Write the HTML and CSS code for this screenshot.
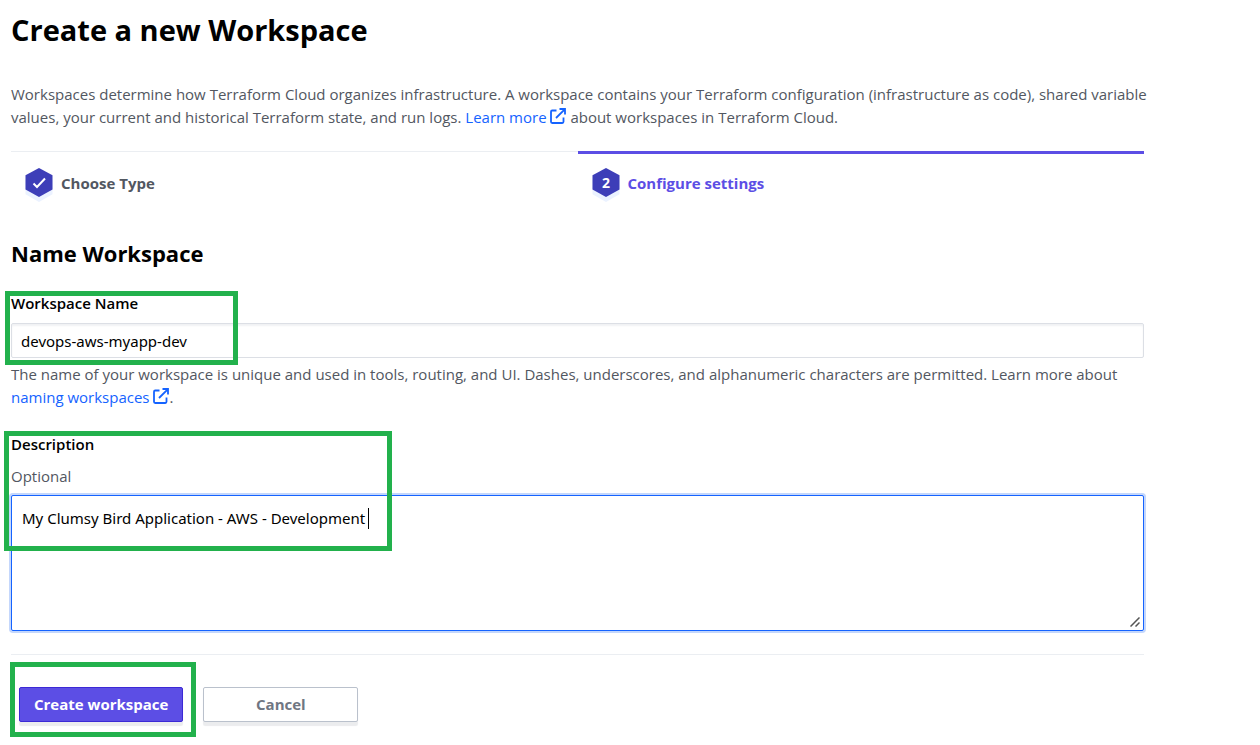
FILE: index.html
```html
<!DOCTYPE html>
<html lang="en">
<head>
<meta charset="utf-8">
<meta name="viewport" content="width=device-width, initial-scale=1">
<title>Create a new Workspace</title>
<link rel="stylesheet" href="styles.css">
</head>
<body>
<svg class="sprite" aria-hidden="true">
  <symbol id="external" viewBox="0 0 16 16">
    <path d="M6.500 2.500H2.200C1.500 2.500 1 3 1 3.700v10.100C1 14.500 1.500 15 2.200 15h10.100c.7 0 1.200-.5 1.200-1.200V9.500M9.500 1H15v5.500M14.700 1.300 6 10" fill="none" stroke="currentColor" stroke-width="1.800"/>
  </symbol>
  <symbol id="hexagon" viewBox="0 0 28 34">
    <path d="M14 5 27.500 12.300v14L14 34 .5 26.300v-14z" fill="#ebf2ff"/>
    <path d="M14 0 27.500 7.300v14.200L14 29 .5 21.500V7.300z" fill="#3d3eb8"/>
  </symbol>
</svg>
<main class="page">
  <h1 class="title">Create a new Workspace</h1>
  <p class="text">Workspaces determine how Terraform Cloud organizes infrastructure. A workspace contains your Terraform configuration (infrastructure as code), shared variable values, your current and historical Terraform state, and run logs. <a class="link" href="#">Learn more <svg class="link-icon" aria-hidden="true"><use href="#external"/></svg></a> about workspaces in Terraform Cloud.</p>

  <ol class="steps">
    <li class="step">
      <svg class="step-icon" viewBox="0 0 28 34" aria-hidden="true"><use href="#hexagon"/><path d="m8.500 15.500 3.500 3.500 8-8.500" fill="none" stroke="#fff" stroke-width="2"/></svg>
      Choose Type
    </li>
    <li class="step step-active" aria-current="step">
      <svg class="step-icon" viewBox="0 0 28 34" aria-hidden="true"><use href="#hexagon"/><text class="step-number" x="14" y="20">2</text></svg>
      Configure settings
    </li>
  </ol>

  <form class="form">
    <h2 class="heading">Name Workspace</h2>
    <div class="field field-name">
      <label class="label" for="name">Workspace Name</label>
      <input class="input" id="name" type="text" value="devops-aws-myapp-dev">
      <p class="text">The name of your workspace is unique and used in tools, routing, and UI. Dashes, underscores, and alphanumeric characters are permitted. Learn more about <a class="link" href="#">naming workspaces <svg class="link-icon" aria-hidden="true"><use href="#external"/></svg></a>.</p>
      <span class="mark mark-name"></span>
    </div>
    <div class="field field-description">
      <label class="label" for="description">Description</label>
      <p class="text hint">Optional</p>
      <textarea class="textarea" id="description">My Clumsy Bird Application - AWS - Development</textarea>
      <span class="caret"></span>
      <svg class="grip" viewBox="0 0 10 10" aria-hidden="true"><path d="M.5 9.500l9-9M5.500 9.500l4-4" fill="none" stroke="#555" stroke-width="1.500"/></svg>
      <span class="mark mark-description"></span>
    </div>
    <div class="actions">
      <button class="button button-primary" type="submit">Create workspace</button>
      <button class="button button-cancel" type="button">Cancel</button>
      <span class="mark mark-create"></span>
    </div>
  </form>
</main>
</body>
</html>
```
FILE: styles.css
```css
* {
  box-sizing: border-box;
}

body {
  margin: 0;
  background: #fff;
  color: #525761;
  font: 15px/23px "Open Sans", "Noto Sans", sans-serif;
}

.sprite {
  position: absolute;
  width: 0;
  height: 0;
}

.page {
  padding: 10px 116px 23px 11px;
}

.title,
.heading {
  margin: 0;
  color: #000;
  font-weight: 700;
}

.title {
  font-size: 29px;
  line-height: 40px;
  margin-bottom: 33px;
}

.heading {
  font-size: 22px;
  line-height: 30px;
  margin-bottom: 24px;
}

.text {
  margin: 0 -12px 0 0;
}

.link {
  color: #1563ff;
  text-decoration: none;
}

.link-icon {
  width: 16px;
  height: 16px;
  vertical-align: -1px;
}

.steps {
  display: grid;
  grid-template-columns: 1fr 1fr;
  list-style: none;
  margin: 22px 0 0;
  padding: 0;
}

.step {
  display: flex;
  align-items: center;
  gap: 8px;
  height: 64px;
  padding-left: 14px;
  font-weight: 700;
  box-shadow: inset 0 1px #ebeef2;
}

.step-active {
  color: #5c4ee5;
  box-shadow: inset 0 3px #5c4ee5;
}

.step-icon {
  width: 28px;
  height: 34px;
  margin-top: 4px;
}

.step-number {
  fill: #fff;
  font: 700 14px "Open Sans", sans-serif;
  text-anchor: middle;
}

.form {
  padding-top: 23px;
}

.field,
.actions {
  position: relative;
}

.label {
  display: block;
  color: #000;
  font-weight: 600;
}

.input,
.textarea {
  display: block;
  width: 100%;
  color: #000;
  font: inherit;
  font-family: "Noto Sans", sans-serif;
  border: 1px solid #dcdfe5;
  border-radius: 2px;
  outline: none;
}

.input {
  height: 35px;
  margin: 8px 0 5px;
  padding: 0 9px;
  box-shadow: inset 0 2px 2px #f1f2f4;
}

.field-description {
  margin-top: 24px;
}

.hint {
  margin-top: 9px;
}

.textarea {
  height: 136px;
  margin-top: 7px;
  padding: 11px 10px;
  resize: vertical;
  border-color: #1563ff;
  box-shadow: 0 0 0 2px #c4d7fc;
}

.textarea::-webkit-resizer {
  background: transparent;
}

.caret {
  position: absolute;
  top: 75px;
  left: 357px;
  width: 1px;
  height: 21px;
  background: #000;
}

.grip {
  position: absolute;
  right: 4px;
  bottom: 4px;
  width: 10px;
  height: 10px;
  pointer-events: none;
}

.actions {
  display: flex;
  gap: 20px;
  margin-top: 23px;
  padding: 32px 8px 0;
  border-top: 1px solid #ebeef2;
}

.button {
  height: 35px;
  border: 1px solid #bac1cc;
  border-radius: 2px;
  padding: 0 14px;
  background: #fff;
  color: #6f7682;
  font: inherit;
  font-weight: 700;
  box-shadow: 0 4px 1px #ebecee;
}

.button-primary {
  min-width: 164px;
  border-color: #3c29d5;
  background: #5c4ee5;
  color: #fff;
}

.button-cancel {
  min-width: 155px;
}

.mark {
  position: absolute;
  border: 5px solid #22b14c;
  pointer-events: none;
}

.mark-name {
  top: -1px;
  left: -6px;
  width: 233px;
  height: 74px;
}

.mark-description {
  top: -2px;
  left: -7px;
  width: 388px;
  height: 120px;
}

.mark-create {
  top: 7px;
  left: -1px;
  width: 186px;
  height: 75px;
}
```
